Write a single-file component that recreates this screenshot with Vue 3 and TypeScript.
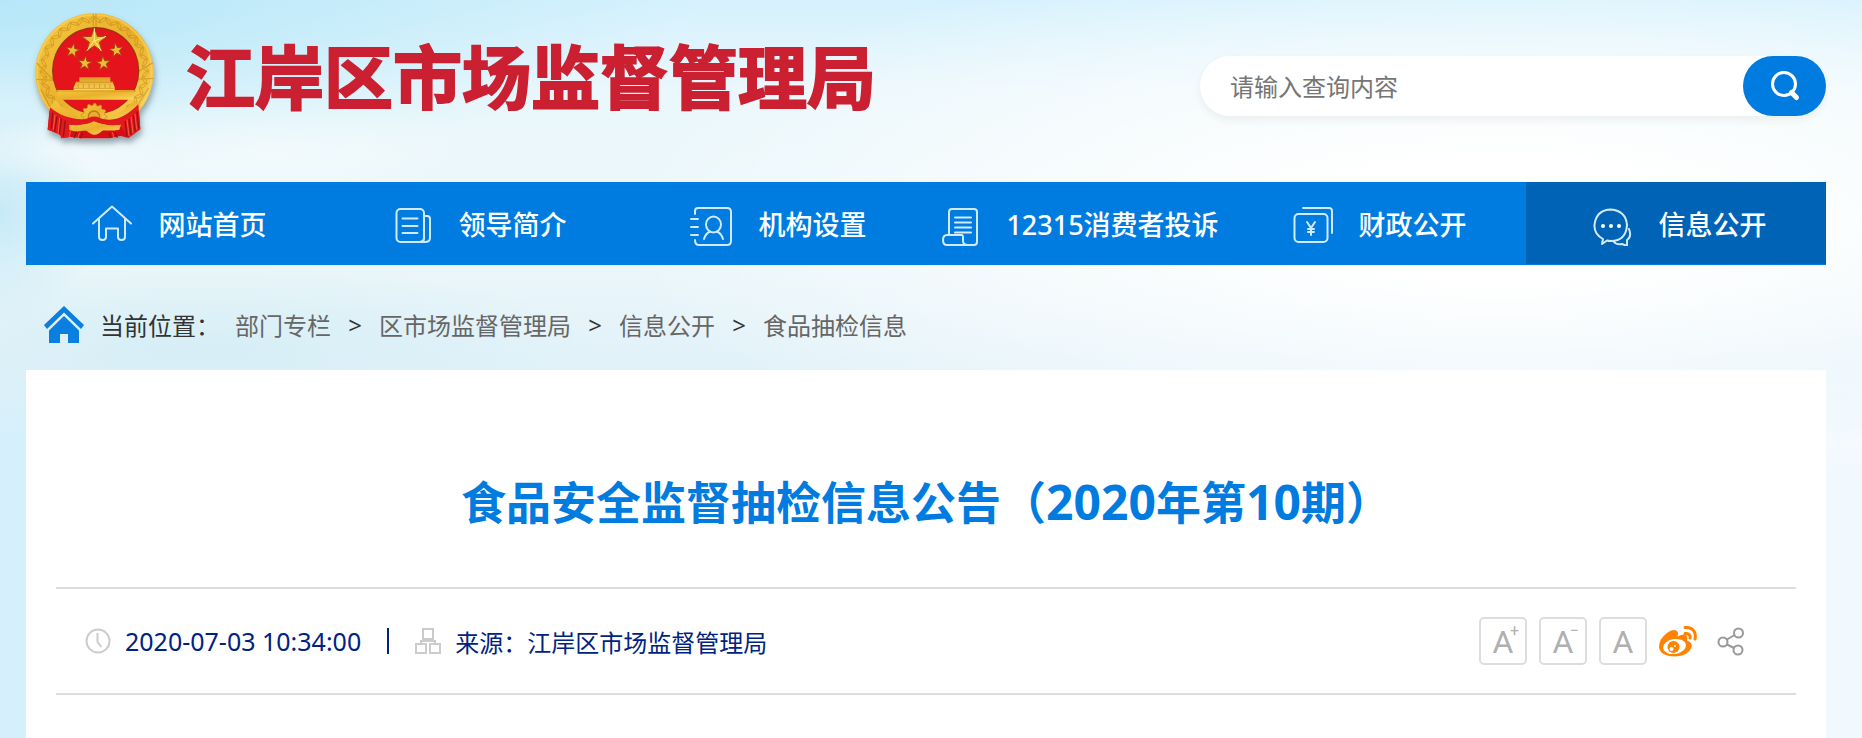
<script setup lang="ts">
import { ref } from 'vue'

type IconName = 'home' | 'doc' | 'contact' | 'scroll' | 'money' | 'chat'
interface NavItem { label: string; icon: IconName; active?: boolean }

const query = ref('')
const navItems: NavItem[] = [
  { label: '网站首页', icon: 'home' },
  { label: '领导简介', icon: 'doc' },
  { label: '机构设置', icon: 'contact' },
  { label: '12315消费者投诉', icon: 'scroll' },
  { label: '财政公开', icon: 'money' },
  { label: '信息公开', icon: 'chat', active: true },
]
const crumbs: string[] = ['部门专栏', '区市场监督管理局', '信息公开', '食品抽检信息']

const star = (cx: number, cy: number, r: number, turn = 0): string =>
  Array.from({ length: 10 }, (_, i) => {
    const radius = i % 2 ? r * 0.4 : r
    const a = ((i * 36 - 90 + turn) * Math.PI) / 180
    return `${(cx + radius * Math.cos(a)).toFixed(1)},${(cy + radius * Math.sin(a)).toFixed(1)}`
  }).join(' ')
const stars = [
  star(223, 122, 39), star(158, 152, 22, 10), star(289, 151, 22, -10),
  star(195, 190, 22, 5), star(250, 190, 22, -5),
]
const gear = (cx: number, cy: number, r: number, rise: number): string => {
  const pts: string[] = []
  for (let i = 0; i < 48; i++) {
    const a = (i * 7.5 * Math.PI) / 180
    const rr = Math.floor(i / 2) % 2 ? r : r + 6
    pts.push(`${(cx + rr * Math.cos(a)).toFixed(1)},${(cy + rr * rise * Math.sin(a)).toFixed(1)}`)
  }
  return pts.join(' ')
}
const grains = Array.from({ length: 44 }, (_, i) => {
  const a = 130 + i * 6.5
  const t = (a * Math.PI) / 180
  return { x: 223 + 153 * Math.cos(t), y: 212 + 153 * Math.sin(t), a: a + (i % 2 ? 48 : 128) }
})
</script>

<template>
  <div class="page">
    <header class="header">
      <svg class="emblem" viewBox="18 0 450 546" aria-hidden="true">
        <defs>
          <linearGradient id="gold" x1="0" y1="0" x2="1" y2="1">
            <stop offset="0" stop-color="#f6c83f" />
            <stop offset=".5" stop-color="#eab02c" />
            <stop offset="1" stop-color="#fbd75a" />
          </linearGradient>
          <linearGradient id="gate" x1="0" y1="0" x2="0" y2="1">
            <stop offset="0" stop-color="#d99a22" />
            <stop offset="1" stop-color="#ffd85c" />
          </linearGradient>
          <filter id="shade" x="-20%" y="-20%" width="140%" height="150%">
            <feDropShadow dx="4" dy="14" stdDeviation="10" flood-color="#455a62" flood-opacity=".55" />
          </filter>
        </defs>
        <g filter="url(#shade)">
          <path d="M90 310 L83 389 L120 404 L124 415 L150 411 L180 415 L270 415 L302 408 L325 414 L361 388 L355 300Z" fill="#d80f18" />
          <circle cx="223" cy="217" r="177" fill="url(#gold)" />
          <g fill="none" stroke="#bd8319" stroke-width="3" opacity=".5">
            <circle cx="223" cy="217" r="172" stroke="#ffdd6a" stroke-width="5" />
            <path v-for="(g, i) in grains" :key="i" d="M-14 0 Q0 -9 14 0 Q0 8 -14 0" :transform="`translate(${g.x} ${g.y}) rotate(${g.a})`" />
            <path d="M220 42v42M228 42v42M51 190l55 57M49 238l58 3M338 225l61-37M343 238l57-3M63 268l26 52M386 264l-31 48" stroke-width="4" />
          </g>
        </g>
        <circle cx="227" cy="212" r="131" fill="#9b3510" />
        <circle cx="227" cy="213" r="128" fill="#e5131c" />
        <polygon v-for="(points, i) in stars" :key="i" :points="points" fill="#efba35" stroke="#a94716" stroke-width="3" />
        <path d="M223 85v38l35-14M223 122l-22 30M223 122l21 31" fill="none" stroke="#fff08e" stroke-width="3" />
        <path d="M112 270h230v29H112z" fill="url(#gold)" />
        <path d="M178 232h93v13h7l6 17v9H161v-9l7-17h10z" fill="url(#gate)" />
        <path d="M168 247h112M162 265h120M108 273h240M175 252v12M190 252v12M207 252v12M223 252v12M239 252v12M255 252v12M270 252v12" fill="none" stroke="#c98a20" stroke-width="2" />
        <path d="M145 303h165l-40 30h-85z" fill="#e5131c" />
        <path d="M105 300 Q150 350 205 358 Q145 390 90 323Z M345 300 Q302 345 245 358 Q307 390 355 323Z" fill="url(#gold)" />
        <polygon :points="gear(222, 348, 32, 1)" fill="url(#gold)" stroke="#c58a1d" stroke-width="2" />
        <circle cx="222" cy="350" r="17" fill="#e8ae2d" stroke="#c47518" stroke-width="4" />
        <path d="M90 322 C120 350 180 367 207 353 Q223 346 240 354 C284 370 325 345 355 312 L361 388 L325 414 L300 375 Q265 380 225 366 Q187 380 148 374 L150 411 L124 415 L120 400 L83 389Z" fill="#e31920" />
        <path d="M148 375 Q190 380 222 364 Q260 382 303 374 L298 389 Q270 394 249 390 Q223 418 199 391 Q166 398 148 390Z" fill="url(#gold)" />
        <path d="M98 338l-4 48M111 350l-7 45M124 356l-6 47M136 361l-6 49M315 363l6 46M327 356l6 49M340 346l6 49M351 335l5 50M170 395l-8 19M188 398l-7 17M267 398l6 15M285 397l7 16" stroke="#98140f" stroke-width="4" />
        <path d="M105 344l-5 45M119 354l-5 48M321 359l6 49M333 350l6 49M345 342l5 46M151 392l-3 20M179 398l-6 16M277 397l5 17" stroke="#ff5540" stroke-width="3" />
      </svg>
      <h1 class="site-name">江岸区市场监督管理局</h1>
      <form class="search" role="search" @submit.prevent>
        <input v-model="query" type="text" placeholder="请输入查询内容" aria-label="请输入查询内容" />
        <button type="submit" aria-label="搜索">
          <svg width="32" height="32" viewBox="1 1 32 32" fill="none" stroke="#fff" stroke-width="3">
            <circle cx="16" cy="15" r="11.5" /><path d="M23.5 23.5l5 5" stroke-width="5" stroke-linecap="round" />
          </svg>
        </button>
      </form>
    </header>

    <nav class="nav">
      <a v-for="item in navItems" :key="item.label" href="#" :class="{ active: item.active }">
        <svg viewBox="0 0 46 46" aria-hidden="true">
          <g v-if="item.icon === 'home'"><path d="M4 23.5L23 6.5L42 23.5M10 19v18q0 3 3.5 3t3.5-3v-8.500h12V37q0 3 3.500 3t3.500-3V19" /></g>
          <g v-else-if="item.icon === 'doc'"><rect x="7.500" y="9" width="27.500" height="33" rx="4" /><path d="M35 16h3q3 0 3 3v19q0 4-5 4H30q5 0 5-4M13.500 18.500h15M13.500 26h15M13.500 33h15" /></g>
          <g v-else-if="item.icon === 'contact'"><path d="M6 14V11q0-3 3-3h29q4 0 4 4v29q0 4-4 4H10q-4 0-4-5M2 19h7M2 27h7M2 35h7" /><ellipse class="line" cx="24.500" cy="24.500" rx="7.500" ry="8" /><path d="M15 39q2-6 6-7.500M34 39q-2-6-6-7.500" /></g>
          <g v-else-if="item.icon === 'scroll'"><path d="M13 35V12q0-3 3-3h22q3 0 3 3v30q0 3-3 3H11q-4 0-4-5t4-5h15q1 0 1 3v3q0 4 5 4M19 17.500h16M19 22.500h16M19 27.500h16M19 32.500h16" /></g>
          <g v-else-if="item.icon === 'money'"><rect x="5.500" y="14" width="33" height="28" rx="4" /><path d="M14 8h26q3 0 3 3V33M18 22l4 6l4-6M19 29h6M19 32h6M22 28v7" /></g>
          <g v-else><path d="M14 39Q5 34 5.500 25Q7 10 22 9.500Q37 11 38 25Q37 41 22 41Q19 41 18 40.500L13 44ZM40 29q3 8-2 11v6l-5-2q-6 1-9-3" /><circle cx="14" cy="26" r="2" /><circle cx="22" cy="26" r="2" /><circle cx="30" cy="26" r="2" /></g>
        </svg>
        <span>{{ item.label }}</span>
      </a>
    </nav>

    <div class="crumbs">
      <svg width="40" height="38" viewBox="0 0 40 38" fill="#0a7fe0" aria-hidden="true">
        <path d="M20 0L40 19l-3 4L20 6.500L3 23l-3-4Z" /><path d="M20 10l15 14.500V37H24v-9h-8v9H5V24.500Z" />
      </svg>
      <span class="here">当前位置：</span>
      <template v-for="(crumb, i) in crumbs" :key="crumb">
        <span v-if="i" class="sep">&gt;</span><a href="#">{{ crumb }}</a>
      </template>
    </div>

    <main class="article">
      <h2>食品安全监督抽检信息公告（<span>2020</span>年第<span>10</span>期）</h2>
      <div class="meta">
        <svg width="26" height="26" viewBox="0 0 26 26" aria-hidden="true"><circle cx="13" cy="13" r="11.500" /><path d="M12.500 5v9l4 5" /></svg>
        <time>2020-07-03 10:34:00</time>
        <i class="bar"></i>
        <svg width="26" height="26" viewBox="0 0 26 26" aria-hidden="true"><path d="M8 1h10v10H8zM1 16h10v9H1zM15 16h10v9H15zM13 11v2M6 16v-3h14v3" /></svg>
        <span>来源：江岸区市场监督管理局</span>
        <div class="tools">
          <button class="size" aria-label="放大字体">A<sup>+</sup></button>
          <button class="size" aria-label="缩小字体">A<sup>−</sup></button>
          <button class="size" aria-label="默认字体">A</button>
          <button class="weibo" aria-label="分享到微博">
            <svg width="38" height="31" viewBox="0 0 38 31" aria-hidden="true">
              <path fill="#ff8200" d="M17 4.500q3 1 1.500 6q8-4 9.500 0q1 1.500 0 4q6 2 4.500 7Q29 30 16 30.500Q1 30 0 21Q0 13 8 7q5-4 9-2.500Z" />
              <ellipse cx="15.500" cy="20.500" rx="11.500" ry="7.500" transform="rotate(-8 15.500 20.500)" fill="#fff" />
              <circle cx="14.500" cy="21" r="6" fill="#ff8200" /><circle cx="12.500" cy="23" r="2" fill="#fff" /><circle cx="16" cy="20" r="1" fill="#fff" />
              <path d="M26 1.500Q33 1 35.500 6q1.500 4 .5 7M26 7.500q4-.5 5 2.500q.5 1.500 0 2" fill="none" stroke="#ff8200" stroke-width="3" stroke-linecap="round" />
            </svg>
          </button>
          <button class="share" aria-label="分享">
            <svg width="28" height="30" viewBox="0 0 28 30" fill="none" stroke="#999" stroke-width="2" aria-hidden="true">
              <circle cx="6" cy="16" r="4.500" /><circle cx="21.500" cy="7" r="4.500" /><circle cx="21" cy="24" r="4.500" /><path d="M10 13.500l7.500-4.500M10 18.500l7 3.500" />
            </svg>
          </button>
        </div>
      </div>
    </main>
  </div>
</template>

<style>
body { margin: 0; }
</style>
<style scoped>
.page {
  box-sizing: border-box;
  min-height: 100vh;
  display: flex;
  flex-direction: column;
  padding: 0 36px 0 26px;
  font-family: "Noto Sans", "Noto Sans CJK SC", sans-serif;
  font-size: 24px;
  background:
    radial-gradient(ellipse 110px 34px at 60px 150px, rgba(255,255,255,.45), transparent),
    radial-gradient(ellipse 220px 60px at 270px 150px, rgba(247,252,253,.6), transparent),
    radial-gradient(ellipse 100px 110px at 0 215px, #c6eaf7, transparent),
    radial-gradient(ellipse 400px 90px at 200px 350px, rgba(211,237,245,.8), transparent),
    radial-gradient(ellipse 900px 280px at 1500px 220px, #fff 20%, transparent),
    radial-gradient(ellipse 700px 170px at 0 0, #b6e7f8, transparent),
    linear-gradient(180deg, #d5f1fd 0, #eaf7fc 90px, #edf7fa 240px, #e2f2f9 360px, transparent 440px),
    linear-gradient(90deg, #d5effc, #f2f9fe);
}
a { color: inherit; text-decoration: none; }
button { padding: 0; border: 0; background: none; font: inherit; cursor: pointer; }
svg { display: block; flex: none; }
.header { display: flex; align-items: flex-start; }
.emblem { width: 150px; height: 182px; }
.site-name {
  margin: 24px 0 0 10px;
  font: 700 69px/100px "Noto Sans CJK SC", sans-serif;
  color: #cb2031;
  -webkit-text-stroke: 2px #cb2031;
  white-space: nowrap;
}
.search {
  display: flex;
  width: 626px;
  height: 60px;
  margin: 56px 0 0 auto;
  border-radius: 30px;
  background: #fff;
  box-shadow: 0 4px 8px rgba(0,0,0,.06);
}
.search input {
  flex: 1;
  min-width: 0;
  padding: 0 30px;
  border: 0;
  outline: 0;
  background: none;
  font: inherit;
}
.search input::placeholder { color: #757575; opacity: 1; }
.search button {
  display: grid;
  place-items: center;
  width: 83px;
  border-radius: 30px;
  background: #007ce0;
}
.nav { display: flex; height: 83px; background: #007ce0; color: #fff; font-size: 27px; font-weight: 500; }
.nav a {
  flex: 1 1 0;
  display: flex;
  align-items: center;
  justify-content: center;
  gap: 24px;
  padding-left: 3px;
  margin-bottom: 1px;
  white-space: nowrap;
}
.nav a.active { background: #0063b5; }
.nav svg { width: 46px; height: 46px; fill: none; stroke: #d2eaff; stroke-width: 2; stroke-linecap: round; stroke-linejoin: round; }
.nav circle { fill: #fff; stroke: none; }
.crumbs { display: flex; align-items: center; height: 91px; padding: 14px 0 0 18px; color: #666; white-space: nowrap; }
.here { margin: 0 15px 0 16px; color: #333; }
.sep { width: 48px; text-align: center; color: #333; }
.article { flex: 1; padding: 100px 30px 42px; background: #fff; }
h2 { margin: 0 0 52px; font-size: 45px; line-height: 64px; text-align: center; color: #007ce0; }
h2 span { font-size: 48px; }
.meta {
  box-sizing: border-box;
  display: flex;
  align-items: center;
  height: 108px;
  padding: 0 51px 0 29px;
  border: solid #ddd;
  border-width: 2px 0;
  color: #002280;
}
.meta > svg { fill: none; stroke: #ccc; stroke-width: 2; }
time { margin-left: 14px; font-size: 25px; }
.bar { width: 2px; height: 26px; margin: 0 26px; background: #002280; }
.meta > span { margin-left: 14px; }
.tools { display: flex; align-items: center; margin-left: auto; }
.size {
  box-sizing: border-box;
  position: relative;
  width: 48px;
  height: 48px;
  margin-right: 12px;
  border: 2px solid #ddd;
  border-radius: 5px;
  color: #b0b0b0;
  font: 400 32px/46px Roboto, sans-serif;
}
.size sup { position: absolute; top: 2px; right: 6px; font-size: 16px; line-height: 20px; }
.share { margin-left: 20px; }
</style>
